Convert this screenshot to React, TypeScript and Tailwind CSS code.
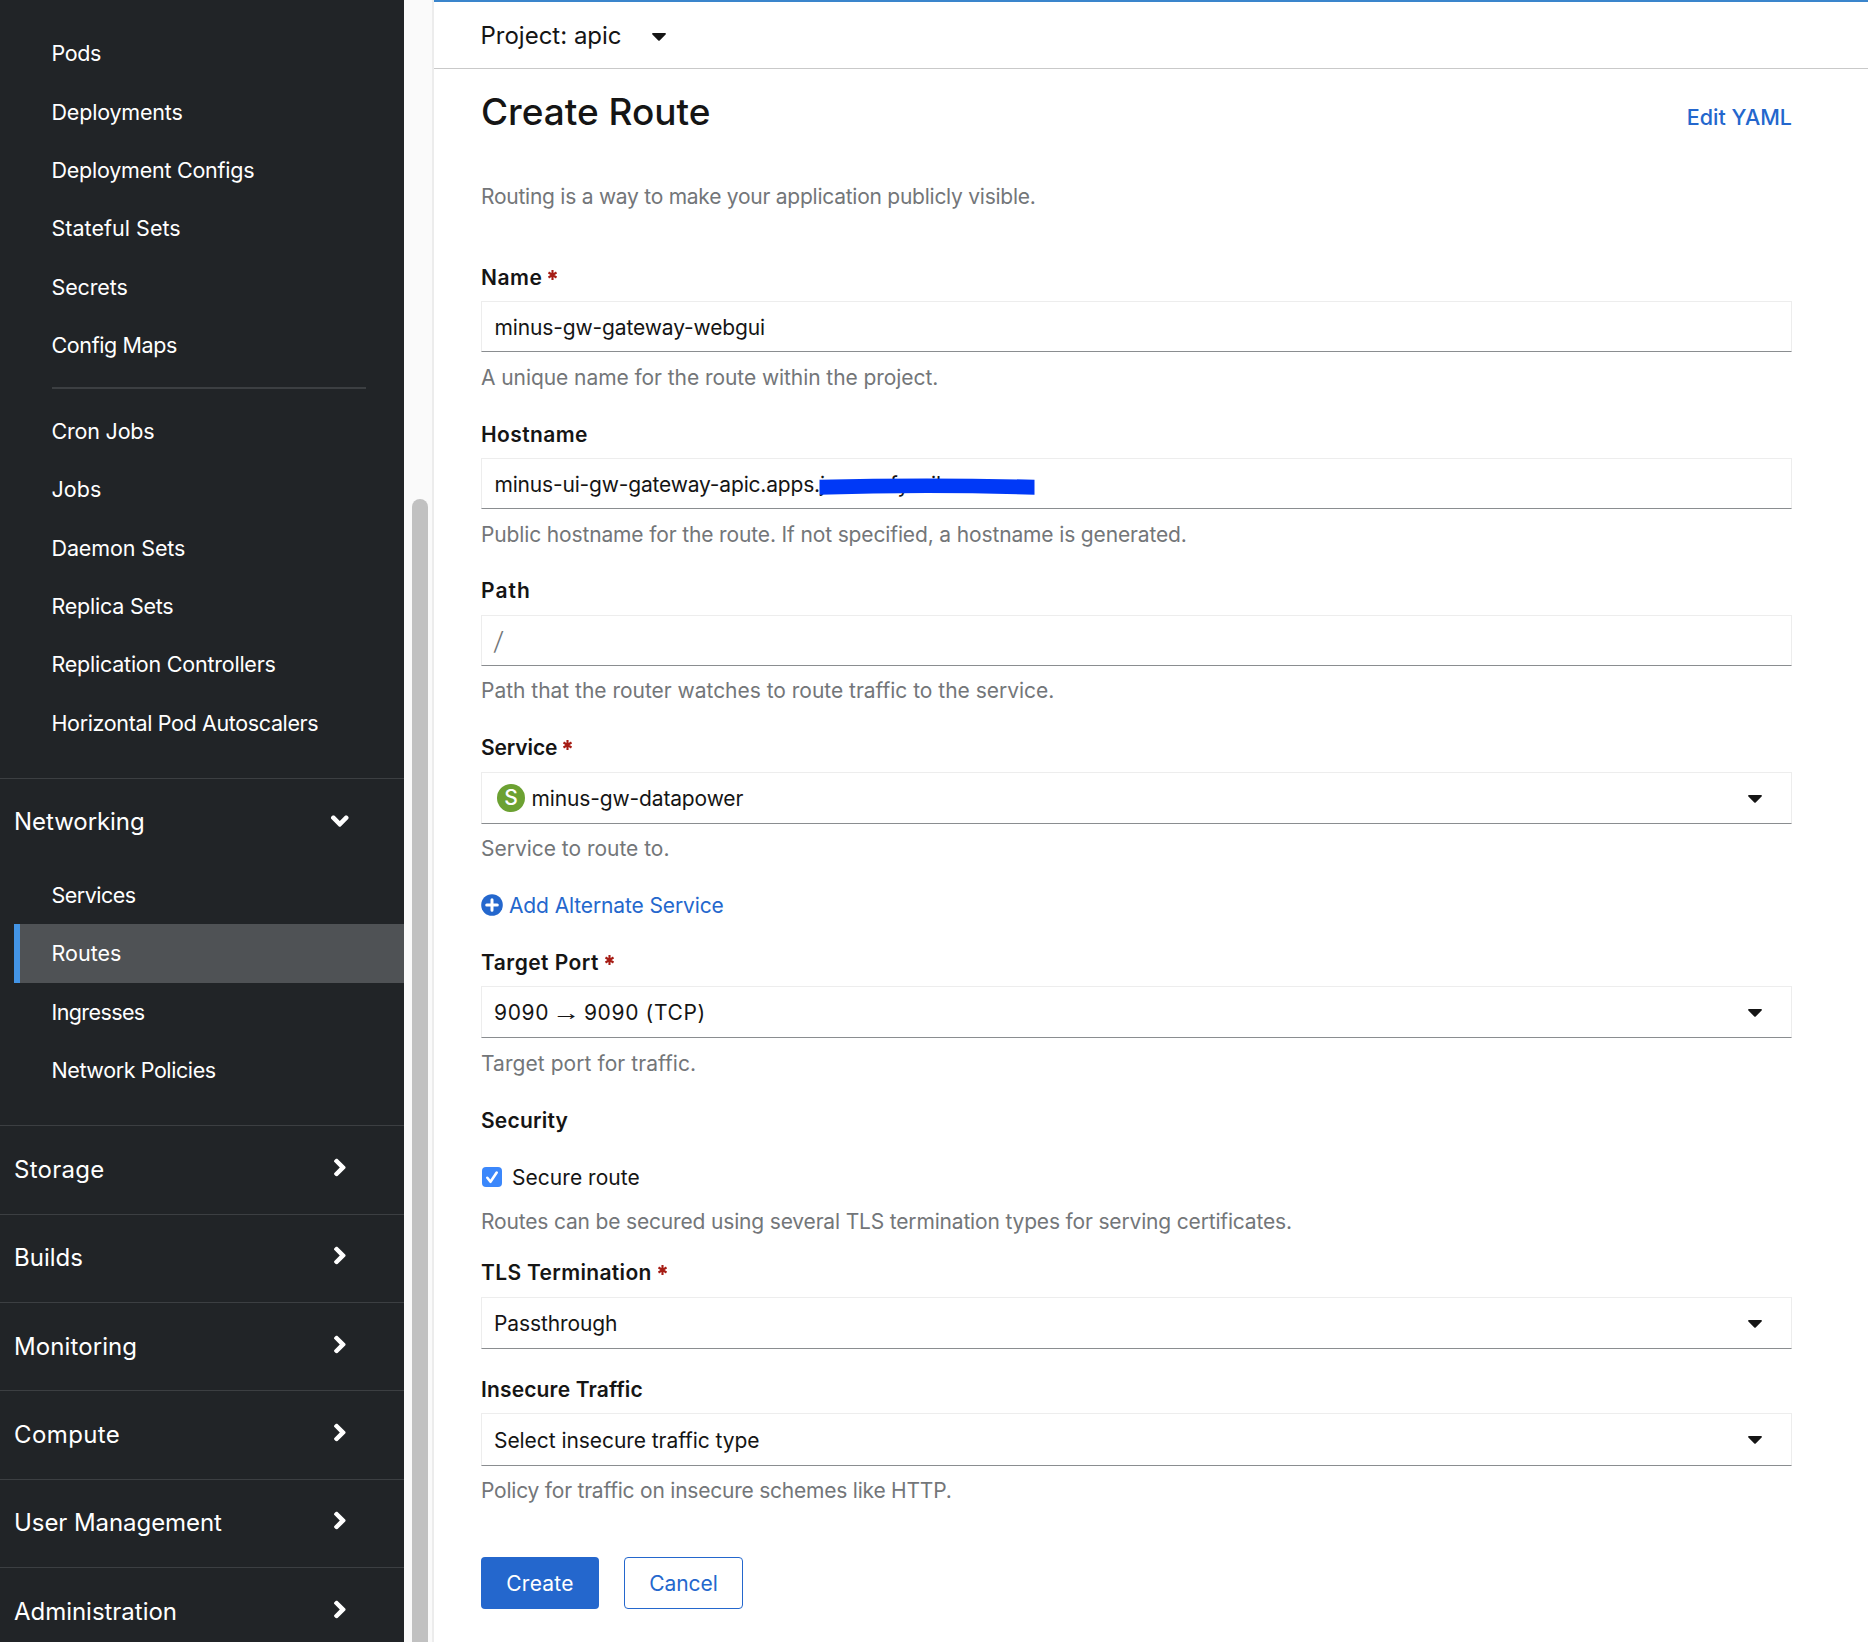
import React from 'react';

type Item = { label: string; track: string };

const WORKLOADS: Item[] = [
  { label: 'Pods', track: 'tracking-[-0.35px]' },
  { label: 'Deployments', track: 'tracking-[-0.19px]' },
  { label: 'Deployment Configs', track: 'tracking-[-0.24px]' },
  { label: 'Stateful Sets', track: 'tracking-[0.03px]' },
  { label: 'Secrets', track: 'tracking-[-0.12px]' },
  { label: 'Config Maps', track: 'tracking-[-0.38px]' },
];

const CONTROLLERS: Item[] = [
  { label: 'Cron Jobs', track: 'tracking-[-0.2px]' },
  { label: 'Jobs', track: 'tracking-[0.05px]' },
  { label: 'Daemon Sets', track: 'tracking-[-0.12px]' },
  { label: 'Replica Sets', track: 'tracking-[-0.23px]' },
  { label: 'Replication Controllers', track: 'tracking-[-0.23px]' },
  { label: 'Horizontal Pod Autoscalers', track: 'tracking-[-0.36px]' },
];

const NETWORKING: Item[] = [
  { label: 'Services', track: 'tracking-[-0.5px]' },
  { label: 'Routes', track: 'tracking-[0.02px]' },
  { label: 'Ingresses', track: 'tracking-[-0.6px]' },
  { label: 'Network Policies', track: 'tracking-[-0.41px]' },
];

const SECTIONS: Item[] = [
  { label: 'Storage', track: 'tracking-[0.25px]' },
  { label: 'Builds', track: 'tracking-[0px]' },
  { label: 'Monitoring', track: 'tracking-[0.1px]' },
  { label: 'Compute', track: 'tracking-[0.4px]' },
  { label: 'User Management', track: 'tracking-[-0.07px]' },
  { label: 'Administration', track: 'tracking-[-0.03px]' },
];

function Angle({ open = false }: { open?: boolean }) {
  return (
    <svg
      className={
        open ? 'h-[18px] w-[11.6px] -translate-y-px rotate-90' : 'h-[18px] w-[11.6px] -translate-y-[2.5px]'
      }
      viewBox="24.7 96 206.7 320"
      fill="currentColor"
    >
      <path d="M224.3 273l-136 136c-9.4 9.4-24.6 9.4-33.9 0l-22.6-22.6c-9.4-9.4-9.4-24.6 0-33.9l96.4-96.4-96.4-96.4c-9.4-9.4-9.4-24.6 0-33.9L54.3 103c9.4-9.4 24.6-9.4 33.9 0l136 136c9.5 9.4 9.5 24.6.1 34z" />
    </svg>
  );
}

function Caret({ className = '' }: { className?: string }) {
  return (
    <svg className={`h-2 w-[14px] ${className}`} viewBox="0 0 14 8" fill="#151515">
      <path d="M1 0h12c.9 0 1.2 1 .6 1.6L7.7 7.5c-.4.4-1 .4-1.4 0L.4 1.6C-.2 1 .1 0 1 0z" />
    </svg>
  );
}

function NavItem({ item, active = false }: { item: Item; active?: boolean }) {
  return (
    <a
      className={`ml-[14px] flex h-[58.4px] items-center border-l-[6px] pl-[31.5px] text-[21.5px] ${
        active ? 'border-[#4394e5] bg-[#4f5255]' : 'border-transparent'
      }`}
    >
      <span className={`whitespace-nowrap ${item.track}`}>{item.label}</span>
    </a>
  );
}

function SectionHead({ item, open = false }: { item: Item; open?: boolean }) {
  return (
    <div
      className={`flex items-center justify-between border-t border-[#3c3f42] pr-[58.5px] pl-[14px] text-[24px] ${
        open ? 'mb-px h-[87px]' : 'h-[88.4px]'
      }`}
    >
      <span className={`whitespace-nowrap ${item.track}`}>{item.label}</span>
      <Angle open={open} />
    </div>
  );
}

function Sidebar() {
  return (
    <nav className="h-full w-[404px] shrink-0 overflow-hidden bg-[#212427] pt-[24.2px] text-white">
      {WORKLOADS.map((i) => (
        <NavItem key={i.label} item={i} />
      ))}
      <div className="mt-[12.6px] mr-[38px] mb-[12.6px] ml-[52px] h-0.5 bg-[#3c3f42]" />
      {CONTROLLERS.map((i) => (
        <NavItem key={i.label} item={i} />
      ))}
      <div className="mt-[25.8px] pb-[25.7px]">
        <SectionHead item={{ label: 'Networking', track: 'tracking-[-0.05px]' }} open />
        {NETWORKING.map((i) => (
          <NavItem key={i.label} item={i} active={i.label === 'Routes'} />
        ))}
      </div>
      {SECTIONS.map((i) => (
        <SectionHead key={i.label} item={i} />
      ))}
    </nav>
  );
}

function Label({ text, track, required = false }: { text: string; track: string; required?: boolean }) {
  return (
    <div className="flex h-[30px] items-center gap-[6px] pt-0.5 leading-[28px] font-semibold whitespace-nowrap">
      <span className={track}>{text}</span>
      {required && (
        <svg className="mb-[7px] h-[10px] w-[9px]" viewBox="0 0 9 10" stroke="#a61c14" strokeWidth="2.1">
          <path d="M4.5 0v10M.5 2.5l8 5M8.5 2.5l-8 5" />
        </svg>
      )}
    </div>
  );
}

function Help({ text, className }: { text: string; className: string }) {
  return <p className={`h-[30px] leading-[32px] whitespace-nowrap text-[#737679] ${className}`}>{text}</p>;
}

const BOX =
  'relative flex items-center justify-between border border-[#ededed] border-b-[#8a8d90] bg-white whitespace-nowrap pt-0.5 pl-3 pr-[29px]';

export default function App() {
  return (
    <div className="flex h-[1642px] w-[1868px] overflow-hidden bg-white font-[Inter,sans-serif] text-[21px] text-[#151515]">
      <Sidebar />
      <div className="flex w-[30px] shrink-0 border-r-2 border-[#ececec] bg-[#fafafa] pt-[499px] pl-2">
        <div className="w-4 rounded-t-full bg-[#c1c1c1]" />
      </div>
      <main className="min-w-0 flex-1">
        <header className="flex h-[69px] items-center gap-[30px] border-t-2 border-b border-t-[#3a85cc] border-b-[#c9c9c9] pt-0.5 pl-[46.5px] text-[24px]">
          <span className="tracking-[0px]">Project: apic</span>
          <Caret className="mt-px" />
        </header>
        <div className="mr-[76px] ml-[47px] pt-[21px]">
          <div className="flex h-11 items-baseline justify-between">
            <h1 className="text-[37px] leading-[44px] font-medium tracking-[-0.02px]">Create Route</h1>
            <a className="text-[21.5px] font-medium tracking-[0.01px] text-[#2467cd]">Edit YAML</a>
          </div>
          <Help
            className="mt-[47px] tracking-[-0.25px]"
            text="Routing is a way to make your application publicly visible."
          />

          <div className="mt-[51px]">
            <Label text="Name" track="tracking-[0.53px]" required />
            <div className={`${BOX} mt-[9px] h-[51px]`}>
              <span className="pl-[0.5px] tracking-[-0.13px]">minus-gw-gateway-webgui</span>
            </div>
            <Help className="mt-[10px] tracking-[-0.07px]" text="A unique name for the route within the project." />
          </div>

          <div className="mt-[27px]">
            <Label text="Hostname" track="tracking-[0.4px]" />
            <div className={`${BOX} mt-[9px] h-[51px]`}>
              <span className="pl-[0.5px] tracking-[-0.18px]">
                minus-ui-gw-gateway-apic.apps.j<span className="ml-[65px]">fy</span>
                <span className="ml-[22px]">il</span>
              </span>
              <svg className="absolute top-[18px] left-[337px] h-5 w-[216px]" viewBox="0 0 216 20" fill="#0039f7">
                <path d="M0.500 2.800Q108 0 215.500 2.800V17.800Q108 14.200 0.500 17.800z" />
              </svg>
            </div>
            <Help
              className="mt-[10px] tracking-[-0.14px]"
              text="Public hostname for the route. If not specified, a hostname is generated."
            />
          </div>

          <div className="mt-[26px]">
            <Label text="Path" track="tracking-[1.04px]" />
            <div className={`${BOX} mt-[10px] h-[51px]`}>
              <span className="text-[25px] font-light text-[#737679]">
                <span className="inline-block skew-x-[-6deg]">/</span>
              </span>
            </div>
            <Help
              className="mt-[9px] tracking-[-0.02px]"
              text="Path that the router watches to route traffic to the service."
            />
          </div>

          <div className="mt-[27px]">
            <Label text="Service" track="tracking-[-0.13px]" required />
            <div className={`${BOX} mt-[10px] h-[52px]`}>
              <span className="flex items-center gap-[6.5px] pl-[3px]">
                <span className="-mt-0.5 flex size-7 items-center justify-center rounded-full bg-[#6ca132] text-[21px] font-medium text-white">
                  S
                </span>
                <span className="tracking-[-0.14px]">minus-gw-datapower</span>
              </span>
              <Caret />
            </div>
            <Help className="mt-[9px] tracking-[-0.02px]" text="Service to route to." />
          </div>

          <a className="mt-[27px] flex h-[30px] items-center gap-[6px] leading-[32px] whitespace-nowrap text-[#2467cd]">
            <svg className="size-[22px]" viewBox="0 0 22 22">
              <circle cx="11" cy="11" r="10.8" fill="#2467cd" />
              <path d="M11 5.700v10.600M5.700 11h10.600" stroke="#fff" strokeWidth="3" strokeLinecap="round" />
            </svg>
            <span className="pt-0.5 tracking-[-0.12px]">Add Alternate Service</span>
          </a>

          <div className="mt-[27px]">
            <Label text="Target Port" track="tracking-[0.46px]" required />
            <div className={`${BOX} mt-[9px] h-[52px]`}>
              <span className="tracking-[0.65px]">
                9090 <span className="inline-block scale-x-[1.35] font-['Liberation_Sans',sans-serif]">→</span> 9090
                (TCP)
              </span>
              <Caret />
            </div>
            <Help className="mt-[10px] tracking-[0.06px]" text="Target port for traffic." />
          </div>

          <div className="mt-[27px]">
            <Label text="Security" track="tracking-[0.2px]" />
            <div className="mt-[27px] flex h-[30px] items-center gap-[10px] pl-px whitespace-nowrap">
              <svg className="size-5" viewBox="0 0 20 20">
                <rect width="20" height="20" rx="4" fill="#3b87fb" />
                <path
                  d="M5.300 10.800l3.200 4L14.700 5.500"
                  fill="none"
                  stroke="#fff"
                  strokeWidth="2.600"
                  strokeLinecap="round"
                  strokeLinejoin="round"
                />
              </svg>
              <span className="pt-0.5 tracking-[0.04px]">Secure route</span>
            </div>
            <Help
              className="mt-[14px] tracking-[-0.17px]"
              text="Routes can be secured using several TLS termination types for serving certificates."
            />
          </div>

          <div className="mt-[21px]">
            <Label text="TLS Termination" track="tracking-[0.33px]" required />
            <div className={`${BOX} mt-[10px] h-[52px]`}>
              <span className="tracking-[-0.1px]">Passthrough</span>
              <Caret />
            </div>
          </div>

          <div className="mt-[25px]">
            <Label text="Insecure Traffic" track="tracking-[0.15px]" />
            <div className={`${BOX} mt-[9px] h-[53px]`}>
              <span className="tracking-[-0.06px]">Select insecure traffic type</span>
              <Caret className="-mt-px" />
            </div>
            <Help
              className="mt-[9px] tracking-[-0.22px]"
              text="Policy for traffic on insecure schemes like HTTP."
            />
          </div>

          <div className="mt-[52px] flex gap-[25px]">
            <button className="h-[52px] w-[118px] rounded-[4px] bg-[#2467cd] pt-0.5 tracking-[0.24px] text-white">
              Create
            </button>
            <button className="h-[52px] w-[119px] rounded-[4px] border border-[#2467cd] pt-0.5 tracking-[-0.06px] text-[#2467cd]">
              Cancel
            </button>
          </div>
        </div>
      </main>
    </div>
  );
}
